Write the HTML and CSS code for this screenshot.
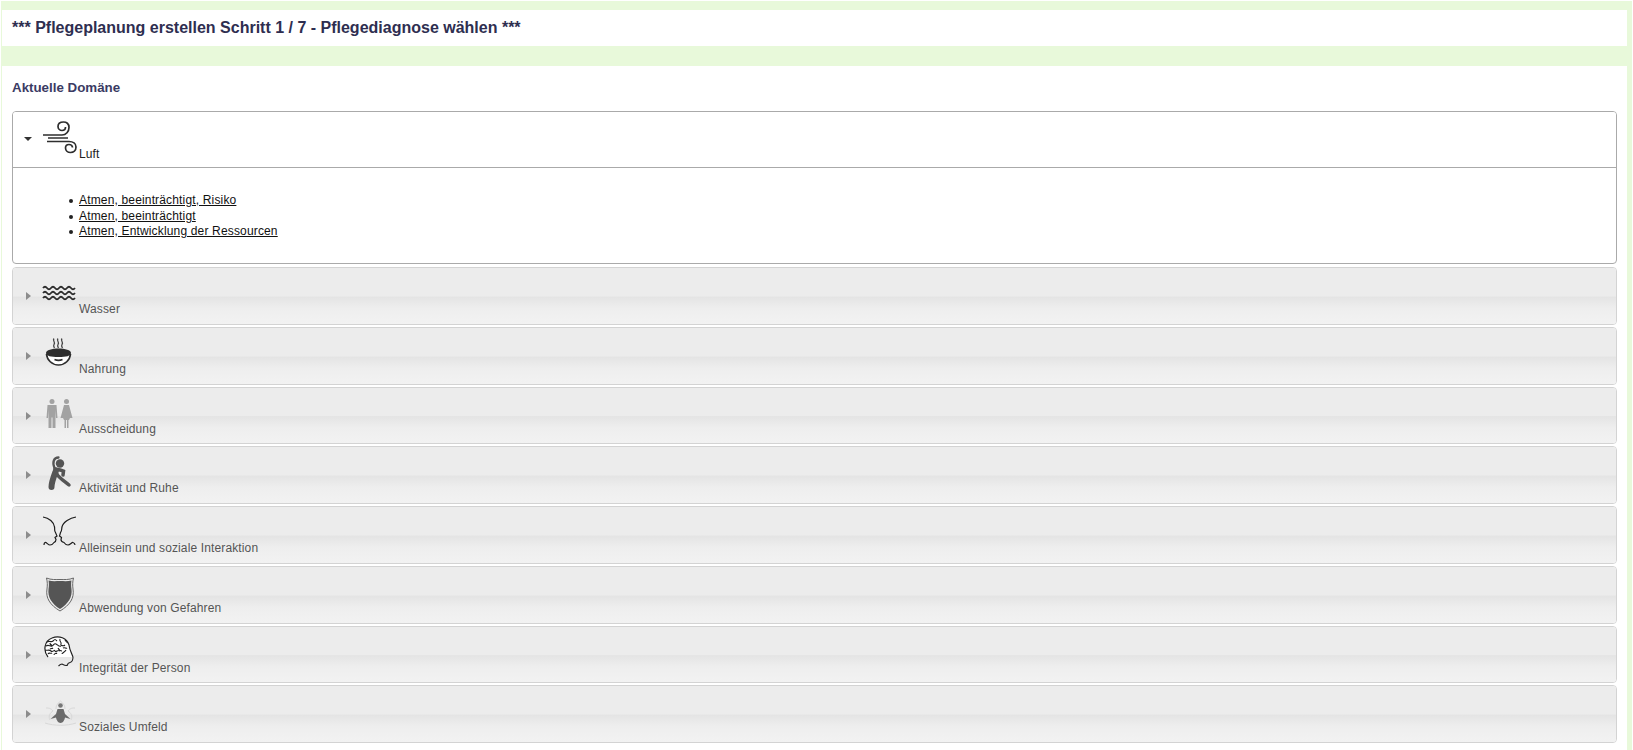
FILE: index.html
```html
<!DOCTYPE html>
<html lang="de">
<head>
<meta charset="utf-8">
<title>Pflegeplanung</title>
<link rel="stylesheet" href="styles.css">
</head>
<body>
<div class="page">
  <header class="title-bar"><h1>*** Pflegeplanung erstellen Schritt 1 / 7 - Pflegediagnose wählen ***</h1></header>
  <main class="content">
    <h2>Aktuelle Domäne</h2>
    <div class="accordion">
      <section class="item open">
        <div class="head">
          <span class="arrow"></span>
          <svg class="icon" viewBox="0 0 36 36"><g fill="none" stroke="#2e2e2e" stroke-width="1.700"><path d="M1 14H20C24 14 27 10.500 27 6.500C27 2.500 24.500 1 21.500 1C18 1 16 3 16 5.500C16 8 18 9.500 20 9.500C22 9.500 23.500 8 23.500 6"/><path d="M6 17H26"/><path d="M5 20.500H27C31 20.500 34 22.500 34 26C34 29.500 31.500 31.500 28.500 31.500C25.500 31.500 23.500 29.500 23.500 27C23.500 25 25 23.500 27 23.500C29 23.500 30.500 25 30.500 26.500"/></g></svg>
          <span class="label">Luft</span>
        </div>
        <div class="panel">
          <ul>
            <li><a href="#">Atmen, beeinträchtigt, Risiko</a></li>
            <li><a href="#">Atmen, beeinträchtigt</a></li>
            <li><a href="#">Atmen, Entwicklung der Ressourcen</a></li>
          </ul>
        </div>
      </section>
      <section class="item">
        <div class="head">
          <span class="arrow"></span>
          <svg class="icon" viewBox="0 0 36 36"><g fill="none" stroke="#2e2e2e" stroke-width="1.800"><path d="M1 11Q3 8.500 5 11T9 11T13 11T17 11T21 11T25 11T29 11T33 11"/><path d="M1 16Q3 13.500 5 16T9 16T13 16T17 16T21 16T25 16T29 16T33 16"/><path d="M1 21Q3 18.500 5 21T9 21T13 21T17 21T21 21T25 21T29 21T33 21"/></g></svg>
          <span class="label">Wasser</span>
        </div>
      </section>
      <section class="item">
        <div class="head">
          <span class="arrow"></span>
          <svg class="icon" viewBox="0 0 36 36"><g fill="none" stroke="#444" stroke-width="1.300"><path d="M12 1.500C10 4 14 5 12 7.500C11 9 12 10 12.500 11"/><path d="M16 1.500C14 4 18 5 16 7.500C15 9 16 10 16.500 11"/><path d="M20 1.500C18 4 22 5 20 7.500C19 9 20 10 20.500 11"/></g><path d="M4.500 17C5 23 10 28 16.500 28S28 23 28.500 17" fill="#fff" stroke="#2e2e2e" stroke-width="1.700"/><path d="M12.500 22.500C15 23.500 18 23.500 20.500 22.500" fill="none" stroke="#2e2e2e" stroke-width="1.700"/><path d="M4 16C4 13 10 11.500 16.500 11.500S29 13 29 16C29 19 24 20 16.500 20S4 19 4 16Z" fill="#2e2e2e"/></svg>
          <span class="label">Nahrung</span>
        </div>
      </section>
      <section class="item">
        <div class="head">
          <span class="arrow"></span>
          <svg class="icon" viewBox="0 0 36 36"><g fill="#a2a2a2"><circle cx="10" cy="4.500" r="2.500"/><path d="M5.500 8H14.500L15.500 21H14L13.500 13V31H10.500V20.500H9.500V31H6.500V13L6 21H4.500Z"/><circle cx="24.500" cy="4.500" r="2.500"/><path d="M22 8H27L30.500 21H28L27 23H26.500V31H25V23H24V31H22.500V23H22L21 21H18.500Z"/></g></svg>
          <span class="label">Ausscheidung</span>
        </div>
      </section>
      <section class="item">
        <div class="head">
          <span class="arrow"></span>
          <svg class="icon" viewBox="0 0 36 36"><circle cx="18" cy="7.500" r="4.200" fill="#555"/><g fill="none" stroke="#555" stroke-linecap="round"><path d="M16.500 1.500C12 1.500 10 6 12.500 12" stroke-width="2.300"/><path d="M13 13C16 13.500 19 14 21.500 15L21 19" stroke-width="3.500"/><path d="M14 14.500C12 20 9.500 26 9.500 31" stroke-width="6"/><path d="M15 18C16 21 22 25 27 29" stroke-width="3.500"/></g></svg>
          <span class="label">Aktivität und Ruhe</span>
        </div>
      </section>
      <section class="item">
        <div class="head">
          <span class="arrow"></span>
          <svg class="icon" viewBox="0 0 36 36"><g fill="none" stroke="#1c1c1c" stroke-width="1.200"><path d="M1 1C7 2 12 6 12.500 11C13 13 12 15 13.500 16.500L15 20L13 21.500L14 23.500C14 25 13 26 12 26.500C11 28 10 29 8 29C6 29 4.500 26 3 26.500C2 27 2 28 2 29"/><path d="M34 1C28 2 21 6 20 11C19.500 13 20 15 18.500 16.500L17.500 20L19.500 21.500L19 23.500C19 25 20 26 22 26.500C23 28 24.500 29 26 29C28 29 30 26 31 26.500C32.500 27 33 28 33 29"/></g></svg>
          <span class="label">Alleinsein und soziale Interaktion</span>
        </div>
      </section>
      <section class="item">
        <div class="head">
          <span class="arrow"></span>
          <svg class="icon" viewBox="0 0 36 36"><path d="M4.500 2C9 4 14 3.500 18 3.500S27 4 31.500 2C30.500 6 30.500 9 31 13C32.500 22 28 29 18 35C8 29 3.500 22 5 13C5.500 9 5.500 6 4.500 2Z" fill="#ededed" stroke="#666" stroke-width="1"/><path d="M6.500 4.500C11 5.500 14 5 18 5S25 5.500 29.500 4.500C29 7 29 10 29.500 13C30.500 21 26.500 27.500 18 33C9.500 27.500 5.500 21 6.500 13C7 10 7 7 6.500 4.500Z" fill="#555"/></svg>
          <span class="label">Abwendung von Gefahren</span>
        </div>
      </section>
      <section class="item">
        <div class="head">
          <span class="arrow"></span>
          <svg class="icon" viewBox="0 0 36 36"><path d="M6 21C1 15 2 5 10 2C17 -1 25 2 27 9C27.500 12 28 14 29 16L31 21" fill="#fff" stroke="#222" stroke-width="1.200"/><g fill="none" stroke="#222" stroke-width="1.100"><path d="M5 6C7 4 9 7 11 5S13 3 15 5M18 3C17 6 20 6 19 8S22 10 23 9M23 4C24 5 24 6 26 7M4 10C7 8 8 11 10 10S12 7 14 8S17 11 19 10M21 12C23 11 24 13 25 12M3 14C5 15 7 13 9 15S12 13 13 15S16 13 18 15M6 18C7 16 9 18 10 17M12 19C12 17 14 18 15 17M16 12C17 14 18 15 20 15M20 18C20 17 23 16 24 14M8 13C9 12 10 13 11 12M8 7C8 9 9 9 10 9"/><path d="M31 21C31 25 30 26 28 26.500C26 27 25.500 28 25.500 29C24 30.500 22 29 20 28C18.500 28 17.500 29 16.500 30"/></g></svg>
          <span class="label">Integrität der Person</span>
        </div>
      </section>
      <section class="item">
        <div class="head">
          <span class="arrow"></span>
          <svg class="icon" viewBox="0 0 36 36"><g fill="none" stroke="#d8d8d8" stroke-width="1"><path d="M18.500 6C15 9 14 11 14 14M18.500 6C22 9 23 11 23 14M4 13C6 13 9 13 11 16C8 18 6 21 8 25M33 13C31 13 28 13 26 16C29 18 31 21 29 25M3 28C12 31 25 31 34 28"/></g><circle cx="18.500" cy="10.500" r="2.300" fill="#777"/><path d="M15.500 14H21.500L23 19L28.500 24L23 22.500C22.500 25 21 28 18.500 28S14.500 25 14 22.500L8.500 24L14 19Z" fill="#6b6b6b"/></svg>
          <span class="label">Soziales Umfeld</span>
        </div>
      </section>
    </div>
  </main>
</div>
</body>
</html>
```
FILE: styles.css
```css
* {
  box-sizing: border-box;
}

html,
body {
  height: 100%;
  margin: 0;
  overflow: hidden;
  background: #fff;
}

body {
  font-family: "Liberation Sans", Arial, sans-serif;
  font-size: 12px;
}

.page {
  height: calc(100vh - 1px);
  margin: 1px 1px 0 1px;
  padding: 9px 5px 0 1px;
  background: #e8f9da;
  display: flex;
  flex-direction: column;
}

.title-bar {
  height: 36px;
  margin-bottom: 20px;
  padding-left: 10px;
  background: #fff;
  display: flex;
  align-items: center;
}

.title-bar h1 {
  margin: 0;
  font-size: 16px;
  font-weight: bold;
  color: #2e2e50;
}

.content {
  flex: 1;
  padding: 14px 10px 0 10px;
  background: #fff;
}

.content h2 {
  margin: 0 0 16px;
  font-size: 13.33px;
  line-height: 15px;
  font-weight: bold;
  color: #3b3b63;
}

.item {
  height: 57.75px;
  margin-bottom: 2px;
  border: 1px solid #d3d3d3;
  border-radius: 4px;
  overflow: hidden;
}

.item.open {
  height: 153px;
  margin-bottom: 3px;
  border-color: #aaa;
  background: #fff;
}

.head {
  position: relative;
  height: 100%;
  padding: 9px 0 0 29px;
  display: flex;
  align-items: flex-start;
  color: #555;
  background: linear-gradient(#ececec 0, #ececec 50%, #e4e4e4 52%, #eeeeee 72%, #f2f2f2 100%);
}

.item.open .head {
  height: 55.5px;
  border-bottom: 1px solid #aaa;
  background: #fff;
  color: #212121;
}

.arrow {
  position: absolute;
  left: 13px;
  top: 24px;
  width: 0;
  height: 0;
  border-style: solid;
  border-width: 4px 0 4px 5px;
  border-color: transparent transparent transparent #8c8c8c;
}

.item.open .arrow {
  left: 11px;
  top: 25px;
  border-width: 4px 4px 0;
  border-color: #333 transparent transparent;
}

.icon {
  width: 36px;
  height: 36px;
  flex: none;
}

.label {
  margin: 25px 0 0 1px;
  line-height: 14px;
  letter-spacing: 0.13px;
}

.item.open .label {
  margin-top: 26px;
}

.panel ul {
  margin: 0;
  padding: 25.5px 0 0 66px;
  list-style: none;
  line-height: 15.5px;
  letter-spacing: 0.16px;
}

.panel li {
  position: relative;
}

.panel li::before {
  content: "";
  position: absolute;
  left: -10px;
  top: 6px;
  width: 4px;
  height: 4px;
  border-radius: 50%;
  background: #222;
}

.panel a {
  color: #111;
}
```
